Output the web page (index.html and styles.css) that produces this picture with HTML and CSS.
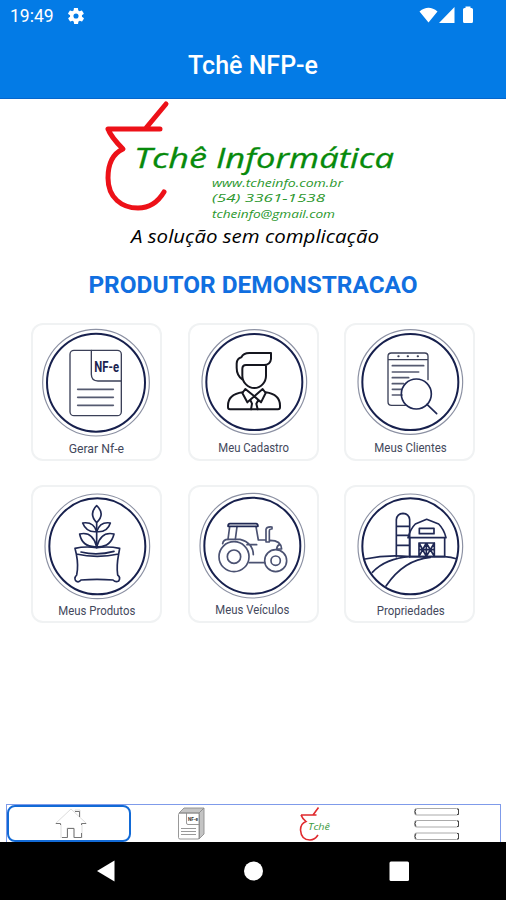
FILE: index.html
```html
<!DOCTYPE html>
<html lang="pt-BR">
<head>
    <meta charset="UTF-8">
    <meta name="viewport" content="width=device-width, initial-scale=1.0">
    <title>Tchê NFP-e</title>
    <link rel="stylesheet" href="styles.css">
</head>
<body>
    <header>
        <div class="status-bar">
            <span class="clock">19:49</span>
            <svg class="gear" viewBox="2 2 20 20"><path fill="#fff" fill-rule="evenodd" d="M19.4 13a7 7 0 0 0 0-2l2.1-1.6c.2-.2.2-.4.1-.7l-2-3.4c-.1-.2-.4-.3-.6-.2l-2.5 1a7.500 7.500 0 0 0-1.700-1l-.4-2.700c0-.2-.2-.4-.5-.4h-4c-.3 0-.5.2-.5.400l-.4 2.700c-.6.200-1.200.600-1.700 1l-2.500-1c-.2-.1-.5 0-.6.200l-2 3.400c-.1.300-.1.500.1.700L4.600 11a7 7 0 0 0 0 2l-2.100 1.600c-.2.200-.2.400-.1.700l2 3.400c.1.200.4.300.6.200l2.500-1c.5.400 1.100.800 1.700 1l.4 2.700c0 .2.200.4.500.4h4c.3 0 .5-.2.500-.4l.4-2.700c.6-.2 1.200-.6 1.700-1l2.500 1c.2.100.5 0 .6-.2l2-3.400c.1-.3.100-.5-.1-.7zM12 15.200a3.200 3.200 0 1 1 0-6.400 3.200 3.200 0 0 1 0 6.400z"/></svg>
            <svg class="signals" viewBox="0 0 56 18">
                <path fill="#fff" d="M.5 5.500Q9.500-2 18.500 5.500L9.500 16.500zM35.500 1v16H20zM44 3.500q0-1.500 1.500-1.500h1V.5h5V2h1Q54 2 54 3.500v12q0 1.500-1.500 1.500h-7Q44 17 44 15.500z"/>
            </svg>
        </div>
        <h1>Tchê NFP-e</h1>
    </header>

    <main>
        <svg class="logo" viewBox="90 99 320 156">
            <path class="gourd" d="M166 104L146 128M108 129H160M108 129C111 137 117 143 123 149C112 154 108 164 108 178C108 198 122 208 138 208C150 208 158 202 164 192"/>
            <g class="script">
                <text class="brand" x="134" y="168" textLength="73" lengthAdjust="spacingAndGlyphs">Tchê</text>
                <text class="brand" x="216" y="168" textLength="178" lengthAdjust="spacingAndGlyphs">Informática</text>
                <text class="contact" x="212" y="187" textLength="131" lengthAdjust="spacingAndGlyphs">www.tcheinfo.com.br</text>
                <text class="contact" x="212" y="202" textLength="113" lengthAdjust="spacingAndGlyphs">(54) 3361-1538</text>
                <text class="contact" x="212" y="217.500" textLength="123" lengthAdjust="spacingAndGlyphs">tcheinfo@gmail.com</text>
                <text class="slogan" x="131" y="243" textLength="248" lengthAdjust="spacingAndGlyphs">A solução sem complicação</text>
            </g>
        </svg>

        <h2>PRODUTOR DEMONSTRACAO</h2>

        <div class="menu">
            <a class="card">
                <svg viewBox="18 24 393 414">
                    <circle class="ring-out" cx="213" cy="203" r="160"/><circle class="ring" cx="213" cy="203" r="147"/>
                    <g class="thin">
                        <rect x="135" y="106" width="154" height="196" rx="12"/>
                        <path d="M199 106V178Q199 198 219 198H289"/>
                        <path class="bar" d="M158 223H265M158 247H265M158 271H265"/>
                    </g>
                    <text class="nfe" x="208" y="171" textLength="74" lengthAdjust="spacingAndGlyphs">NF-e</text>
                    <text class="label" x="131" y="415" textLength="166" lengthAdjust="spacingAndGlyphs">Gerar Nf-e</text>
                </svg>
            </a>
            <a class="card">
                <svg viewBox="18 24 393 414">
                    <circle class="ring-out" cx="217" cy="201" r="157"/><circle class="ring" cx="217" cy="201" r="144"/>
                    <g class="dark">
                        <path d="M181 193Q164 181 164 158V146Q165 130 178 127Q184 114 202 114H267V132Q265 150 246 150H192Q181 150 181 162V182C181 202 198 219 217 219S252 202 252 182V150"/>
                        <path d="M182 232Q138 238 138 272V277Q138 283 144 283H288Q294 283 294 277V272Q294 238 251 232"/>
                        <path d="M190 222L181 234L196 262L217 244L237 262L251 234L242 222L217 244ZM205 255L210 266L207 283M229 255L223 266L227 283"/>
                    </g>
                    <text class="label" x="109" y="410" textLength="212" lengthAdjust="spacingAndGlyphs">Meu Cadastro</text>
                </svg>
            </a>
            <a class="card">
                <svg viewBox="18 24 393 414">
                    <circle class="ring-out" cx="217" cy="201" r="157"/><circle class="ring" cx="217" cy="201" r="144"/>
                    <g class="thin">
                        <path d="M270 194V124Q270 114 260 114H160Q150 114 150 124V260Q150 271 161 271H202M150 134H270"/>
                        <path class="bar" d="M163 152H257M163 171H242M163 188H212M163 206H197M163 223H190M163 240H192"/>
                        <path class="dots" d="M181 124h1M209 124h1M239 124h1"/>
                    </g>
                    <g class="navy">
                        <circle cx="235" cy="237" r="45"/>
                        <path d="M267 268L296 296"/>
                    </g>
                    <text class="label" x="109" y="410" textLength="217" lengthAdjust="spacingAndGlyphs">Meus Clientes</text>
                </svg>
            </a>
            <a class="card">
                <svg viewBox="18 15 393 414">
                    <circle class="ring-out" cx="217" cy="199" r="157"/><circle class="ring" cx="217" cy="199" r="144"/>
                    <g class="navy">
                        <path d="M215 77Q190 102 215 128Q242 102 215 77ZM215 128V203"/>
                        <path d="M215 155Q206 124 173 129Q184 158 215 155ZM215 155Q225 124 256 129Q247 158 215 155ZM215 200Q203 153 164 162Q172 203 215 200ZM215 200Q228 153 267 162Q257 203 215 200Z"/>
                        <path d="M150 205Q180 198 215 203Q250 198 284 205L281 222Q216 236 154 222ZM154 222Q161 258 155 285Q145 296 154 304Q162 308 168 300Q216 296 264 300Q272 308 281 303Q288 293 278 285Q274 258 281 222M168 216Q216 228 267 214"/>
                    </g>
                    <text class="label" x="100" y="406" textLength="231" lengthAdjust="spacingAndGlyphs">Meus Produtos</text>
                </svg>
            </a>
            <a class="card">
                <svg viewBox="18 15 393 414">
                    <circle class="ring-out" cx="211" cy="197" r="157"/><circle class="ring" cx="211" cy="197" r="144"/>
                    <g class="slate">
                        <circle cx="156" cy="230" r="45"/><circle cx="156" cy="230" r="20"/>
                        <circle cx="281" cy="242" r="33"/><circle cx="281" cy="242" r="14"/>
                        <path d="M122 191Q124 178 138 178H174Q213 188 214 224M202 248H247M195 194H224"/>
                        <path d="M143 140L138 178M165 140L160 178M222 140L229 180H252V148Q254 139 270 141V147Q262 146 262 153V186H252V180M262 181Q297 180 299 207H284Q285 196 293 194"/>
                        <path class="roof" d="M138 139Q138 131 144 131H222Q228 131 228 139Z"/>
                    </g>
                    <text class="label" x="100" y="402" textLength="222" lengthAdjust="spacingAndGlyphs">Meus Veículos</text>
                </svg>
            </a>
            <a class="card">
                <svg viewBox="18 15 393 414">
                    <circle class="ring-out" cx="217" cy="199" r="157"/><circle class="ring" cx="217" cy="199" r="144"/>
                    <g class="navy">
                        <path d="M175 230V119Q177 101 195 100Q213 101 215 119V230M175 139H215M175 166H210M175 196H215"/>
                        <path d="M210 173Q217 147 232 132L266 118L302 132Q318 148 324 173ZM215 173V230H320V173M244 145H288V161H244Z"/>
                        <path d="M243 229V189H289V229M265 189V229M243 189L265 229L289 189M243 229L265 189L289 229M243 209H289"/>
                        <path d="M81 237Q148 223 216 230H320Q340 231 355 236M216 230Q143 235 103 277M277 232Q197 239 144 318"/>
                    </g>
                    <text class="label" x="116" y="405" textLength="204" lengthAdjust="spacingAndGlyphs">Propriedades</text>
                </svg>
            </a>
        </div>
    </main>

    <nav class="tabs">
        <a class="tab active">
            <svg viewBox="-1 0 123 36">
                <g class="home-faint"><path d="M47 22L63 7L79 22M67 9V8H72V15M53 22V36H59V26H66V36H74V22"/></g>
                <g class="home-dark"><path d="M48 21.500H52.500V23M73.500 23V21.500H78M54 35.500H59.500V26.500H66V35.500H73.500V31M67 9.500H71.500V15"/></g>
            </svg>
        </a>
        <a class="tab">
            <svg viewBox="-1 0 123 36">
                <g class="doc">
                    <path class="side" d="M49 8L54 3H74L69 8ZM69 8L74 3V29L69 34Z"/>
                    <rect x="48.500" y="8" width="21" height="26" rx="1.500"/>
                    <path d="M56.500 8V18Q56.500 19.500 58 19.500H69.500M51 23.500H66M51 26.500H66M51 29.500H66"/>
                </g>
                <text class="doc-text" x="58" y="16" textLength="10" lengthAdjust="spacingAndGlyphs">NF-e</text>
            </svg>
        </a>
        <a class="tab">
            <svg viewBox="-1 0 123 36">
                <path class="gourd-small" d="M65.500 2.500L60 10M48 10H63.500M48 10Q49 13 53 16.500C49 18 47.500 21 47.500 25C48 32 52 35 57 35C61 35 63 33 65 30"/>
                <text class="tche" x="55" y="25" textLength="22" lengthAdjust="spacingAndGlyphs">Tchê</text>
            </svg>
        </a>
        <a class="tab">
            <svg viewBox="-3 0 123 36">
                <g class="lines">
                    <rect x="37.500" y="3.500" width="44" height="6.500" rx="2"/><rect x="37.500" y="15.500" width="44" height="6.500" rx="2"/><rect x="37.500" y="28" width="44" height="6.500" rx="2"/>
                    <path d="M39 4Q37 6.500 39 9.500M80 4H81.500V9.500H80M39 16Q37 18.500 39 21.500M80 16H81.500V21.500H80M39 28.500Q37 31.500 39 34M80 28.500H81.500V34H80"/>
                </g>
            </svg>
        </a>
    </nav>

    <footer>
        <svg viewBox="0 0 506 58">
            <path fill="#fff" d="M97 29L114.500 18.500V39.500Z"/>
            <circle fill="#fff" cx="253.500" cy="29" r="9.500"/>
            <rect fill="#fff" x="389.500" y="19.500" width="19.500" height="19.500" rx="1.500"/>
        </svg>
    </footer>
</body>
</html>
```

FILE: styles.css
```css
* {
    box-sizing: border-box;
}
body {
    margin: 0;
    height: 900px;
    display: flex;
    flex-direction: column;
    background-color: #fff;
    font-family: Roboto, Arial, sans-serif;
    overflow: hidden;
}
svg {
    display: block;
}
header {
    height: 99px;
    background-color: #037be6;
    border-bottom: 1px solid #0566cc;
    color: white;
}
.status-bar {
    display: flex;
    align-items: center;
    height: 32px;
    padding-left: 10px;
}
.clock {
    width: 44px;
    font-size: 17.5px;
}
.gear {
    width: 16px;
    height: 16px;
    margin-left: 14px;
}
.signals {
    width: 56px;
    height: 18px;
    margin-left: auto;
    margin-right: 31px;
    margin-top: -2px;
}
h1 {
    margin: 18px 0 0;
    font-size: 25px;
    line-height: 32px;
    font-weight: 500;
    text-align: center;
}
main {
    flex: 1;
}
.logo {
    width: 320px;
    height: 156px;
    margin-left: 90px;
}
.gourd {
    fill: none;
    stroke: #ed1118;
    stroke-width: 5;
    stroke-linecap: round;
    stroke-linejoin: round;
}
.script {
    font-family: "Open Sans", sans-serif;
    font-style: italic;
}
.brand {
    font-size: 28px;
    fill: #078a0b;
    stroke: #078a0b;
    stroke-width: 0.3px;
}
.contact {
    font-size: 11.5px;
    fill: #2b972d;
}
.slogan {
    font-size: 19px;
    fill: #000;
}
h2 {
    margin: 14px 0 0;
    height: 32px;
    font-size: 24.4px;
    line-height: 32px;
    font-weight: 700;
    text-align: center;
    color: #116fe0;
    white-space: nowrap;
}
.menu {
    display: grid;
    grid-template-columns: repeat(3, 131px);
    grid-auto-rows: 138px;
    gap: 24px 25.6px;
    margin: 22px 0 0 31px;
}
.card {
    border-radius: 12px;
    box-shadow: inset 0 0 0 2px #f0f2f3;
}
.card svg {
    width: 131px;
    height: 138px;
    fill: none;
    stroke-linecap: round;
    stroke-linejoin: round;
}
.ring {
    stroke: #17204d;
    stroke-width: 6;
}
.ring-out {
    stroke: #8c91a3;
    stroke-width: 3.5;
}
.thin {
    stroke: #3b4058;
    stroke-width: 4;
}
.bar {
    stroke: #555a70;
    stroke-width: 5;
}
.dots {
    stroke-width: 6;
}
.dark {
    stroke: #15161f;
    stroke-width: 6;
}
.navy {
    stroke: #1f2854;
    stroke-width: 5;
}
.slate {
    stroke: #4b5272;
    stroke-width: 5;
}
.roof {
    stroke: #1f2854;
}
.label {
    font-size: 39px;
    fill: #43485c;
}
.nfe {
    font-size: 42px;
    font-weight: 700;
    fill: #1b2450;
}
.tabs {
    display: grid;
    grid-template-columns: repeat(4, 122.5px);
    height: 38px;
    margin: 0 5px 0 6px;
    border: 1px solid #7f9bea;
    border-bottom: 0;
}
.tab {
    display: flex;
    justify-content: center;
}
.tab.active {
    margin-right: -1px;
    border: 2px solid #126ad6;
    border-radius: 8px;
}
.tab svg {
    width: 123px;
    height: 36px;
    flex: none;
    fill: none;
}
.tab.active svg {
    margin-top: -5px;
}
.home-faint {
    stroke: #ddd;
}
.home-dark {
    stroke: #777;
}
.doc {
    stroke: #8d8d8d;
    stroke-width: 0.9;
}
.side {
    fill: #c4c4c4;
}
.doc-text {
    font-size: 6px;
    font-weight: 700;
    fill: #333;
}
.gourd-small {
    stroke: #e02a2e;
    stroke-width: 1.6;
}
.tche {
    font-family: "Open Sans", sans-serif;
    font-style: italic;
    font-size: 9px;
    fill: #3c9a3e;
}
.lines rect {
    stroke: #aaa;
}
.lines path {
    stroke: #444;
}
footer {
    height: 58px;
    background-color: #000;
}
footer svg {
    width: 506px;
    height: 58px;
}
```
